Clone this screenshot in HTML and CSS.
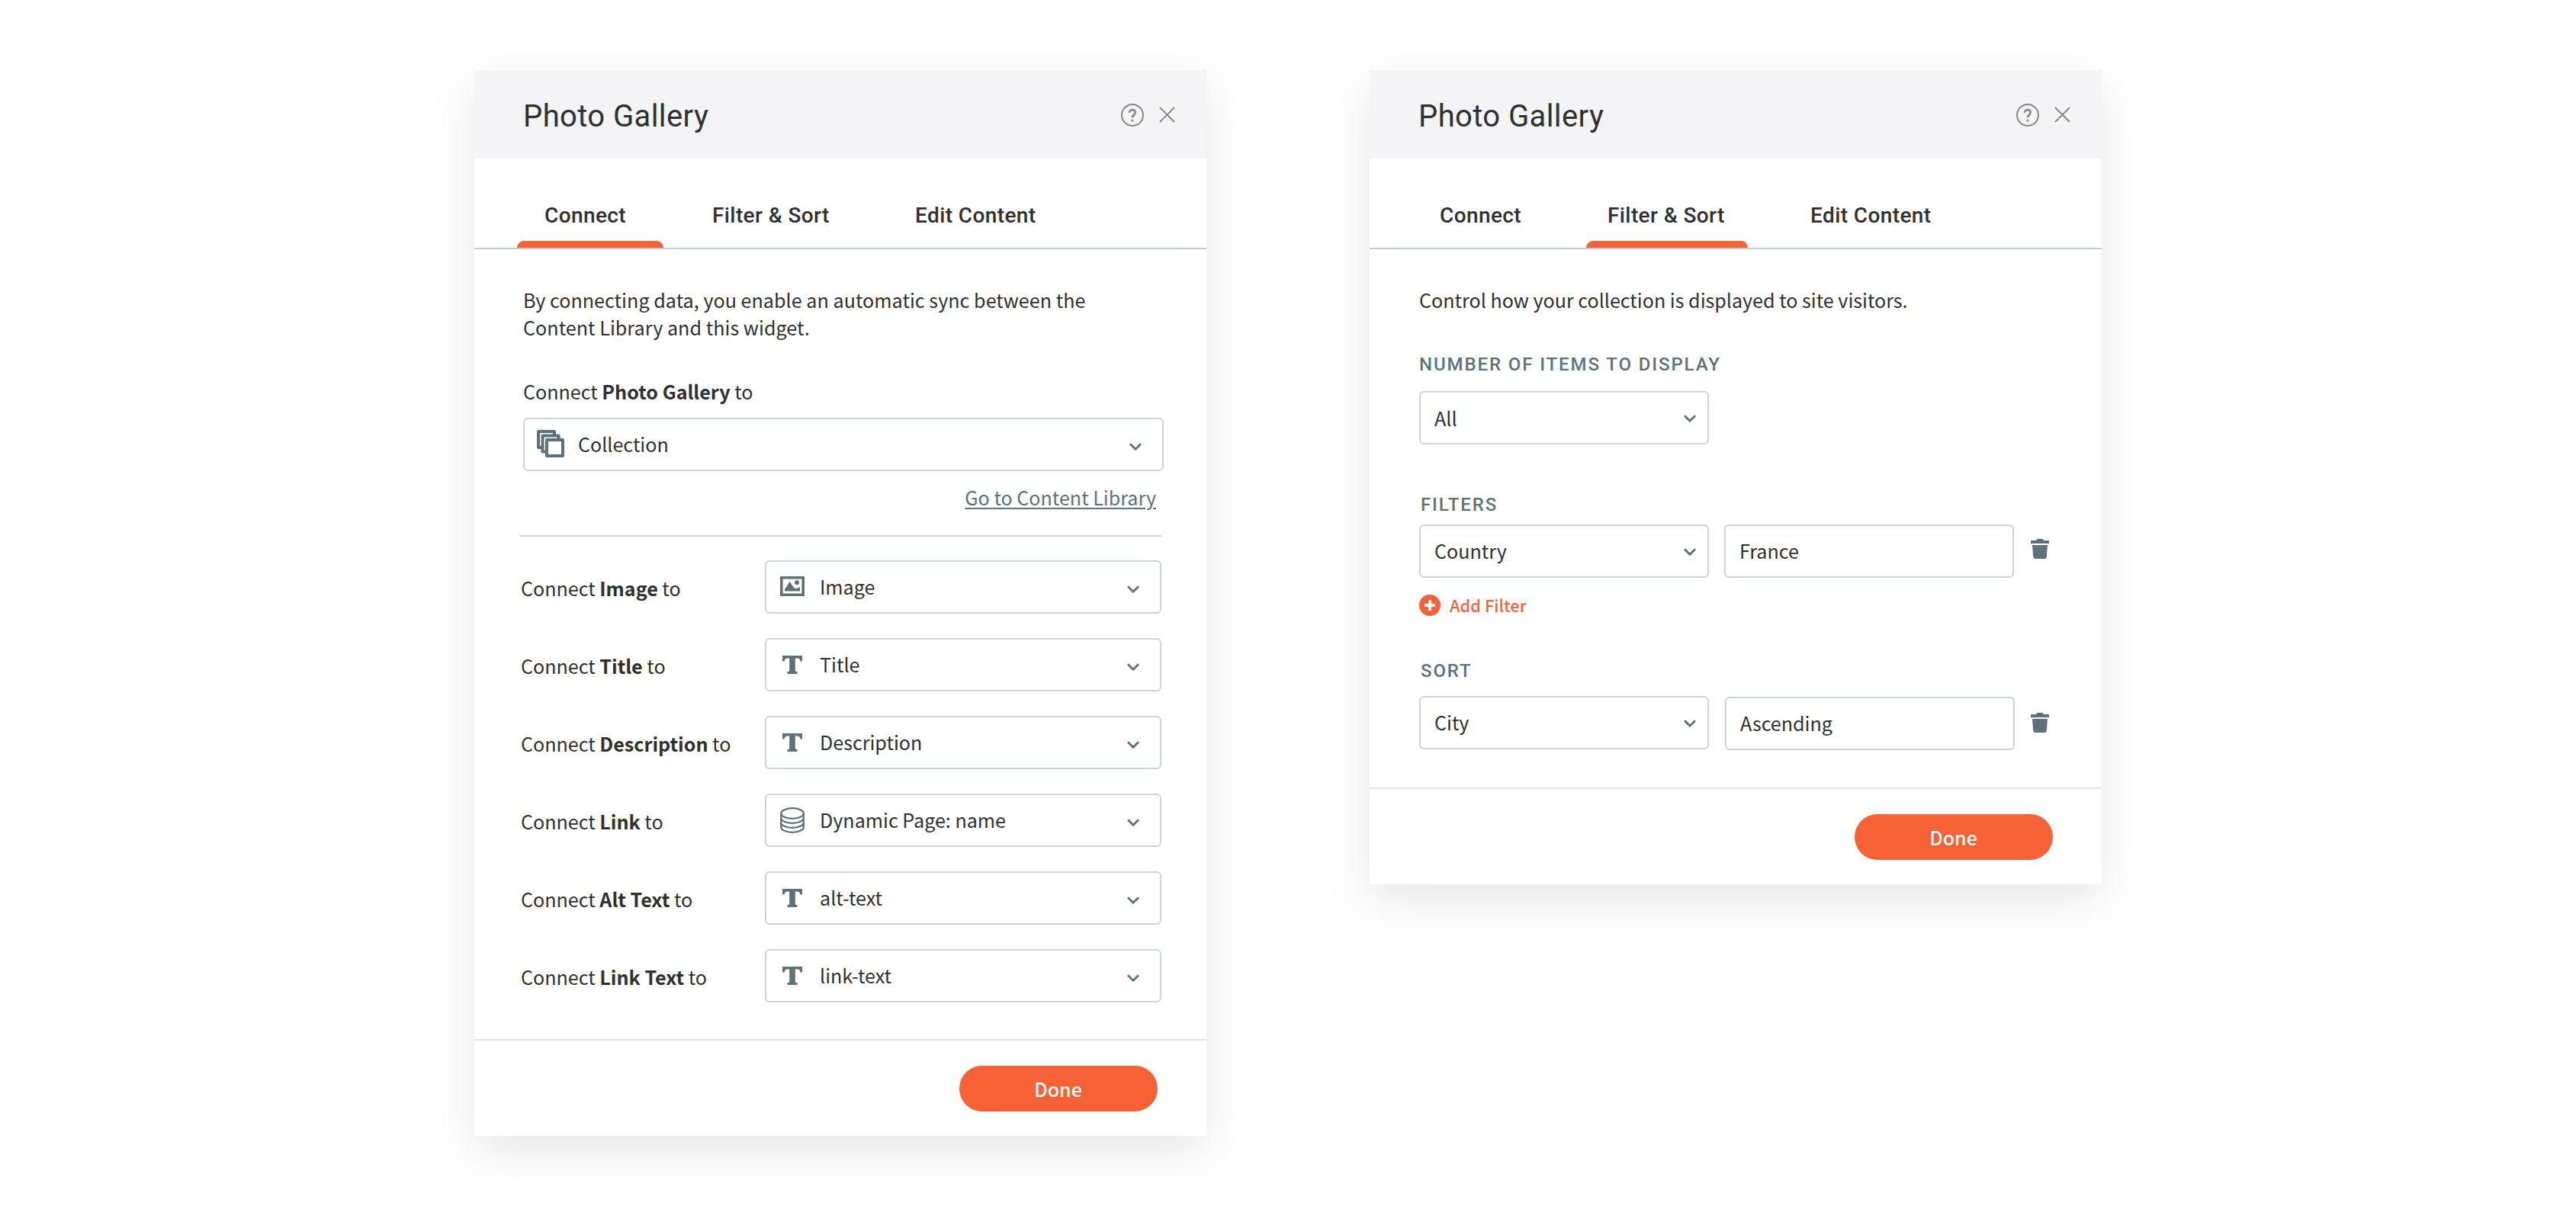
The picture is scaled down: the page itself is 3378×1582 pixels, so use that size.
FILE: index.html
```html
<!DOCTYPE html>
<html lang="en">
  <head>
    <meta charset="UTF-8" />
    <meta name="viewport" content="width=device-width, initial-scale=1.0" />
    <title>Photo Gallery</title>
    <link rel="stylesheet" href="styles.css">
  </head>
  <body>
    <!-- shared icons -->
    <svg class="sprite" aria-hidden="true">
      <symbol id="icon-help" viewBox="0 0 30 30">
        <circle cx="15" cy="15" r="14" fill="none" stroke="currentColor" stroke-width="2" />
        <path d="M11 11.800c0-2.300 1.500-3.700 3.900-3.700 2.300 0 3.800 1.300 3.800 3.300 0 1.500-.8 2.300-1.900 3.300-1.200 1-1.800 1.700-1.800 3.500" fill="none" stroke="currentColor" stroke-width="2.600" />
        <circle cx="14.900" cy="22" r="1.600" fill="currentColor" />
      </symbol>
      <symbol id="icon-close" viewBox="0 0 22 22">
        <path d="M1 1l20 20M21 1L1 21" fill="none" stroke="currentColor" stroke-width="2" />
      </symbol>
      <symbol id="icon-chevron" viewBox="0 0 16 10">
        <path d="M1 1.200l7 7 7-7" fill="none" stroke="currentColor" stroke-width="2.800" />
      </symbol>
      <symbol id="icon-collection" viewBox="0 0 36 36">
        <g fill="#fff" stroke="currentColor" stroke-width="4" stroke-linejoin="round">
          <path d="M2 2h21v21H2z" />
          <path d="M7.500 7.500h21v21h-21z" />
          <path d="M13 13h21v21H13z" />
        </g>
      </symbol>
      <symbol id="icon-image" viewBox="0 0 32 26">
        <path d="M1.800 1.800h28.400v22.400H1.800z" fill="none" stroke="currentColor" stroke-width="3.600" />
        <path d="M6 19.500v-2.500L12.500 7l6 8.500 3 .5 4.500-2v5.500z" fill="currentColor" />
        <circle cx="22" cy="8.200" r="2.900" fill="currentColor" />
      </symbol>
      <symbol id="icon-text" viewBox="0 0 26 24">
        <path d="M0 0h26v7.500h-2.500C23 4.500 22 3.500 19.500 3.500h-2.700v16c0 1.100.8 1.500 2.700 1.600V24h-13v-2.900c1.900-.1 2.700-.5 2.700-1.600v-16H6.500C4 3.500 3 4.500 2.500 7.500H0z" fill="currentColor" />
      </symbol>
      <symbol id="icon-database" viewBox="0 0 32 34">
        <g fill="none" stroke="currentColor" stroke-width="2.200">
          <ellipse cx="16" cy="8" rx="14.800" ry="6.800" />
          <path d="M1.200 8v18c0 3.900 6.600 6.800 14.800 6.800s14.800-2.900 14.800-6.800V8" />
          <path d="M1.200 14c0 3.900 6.600 6.800 14.800 6.800s14.800-2.900 14.800-6.800M1.200 20c0 3.900 6.600 6.800 14.800 6.800s14.800-2.900 14.800-6.800" />
        </g>
      </symbol>
      <symbol id="icon-trash" viewBox="0 0 24 26">
        <path d="M0 3q0-1 1-1h6.500V1q0-1 1-1h7q1 0 1 1v1H23q1 0 1 1v3H0zM2 8h20l-1.200 15.200Q20.500 26 18 26H6q-2.500 0-2.800-2.800z" fill="currentColor" />
      </symbol>
      <symbol id="icon-plus" viewBox="0 0 28 28">
        <circle cx="14" cy="14" r="14" fill="currentColor" />
        <path d="M14 7v14M7 14h14" stroke="#fff" stroke-width="4" />
      </symbol>
    </svg>

    <div class="panels">
      <div class="panel">
        <div class="header">
          <h1>Photo Gallery</h1>
          <svg class="help"><use href="#icon-help" /></svg>
          <svg class="close"><use href="#icon-close" /></svg>
        </div>
        <div class="tabs">
          <div class="tab tab-connect active">Connect</div>
          <div class="tab tab-filter">Filter &amp; Sort</div>
          <div class="tab tab-edit">Edit Content</div>
        </div>
        <div class="content">
          <p class="intro">
            By connecting data, you enable an automatic sync between the<br>
            Content Library and this widget.
          </p>
          <div class="label">Connect <b>Photo Gallery</b> to</div>
          <div class="select select-main">
            <svg class="icon-collection"><use href="#icon-collection" /></svg>
            <span>Collection</span>
            <svg class="chevron"><use href="#icon-chevron" /></svg>
          </div>
          <div class="library"><a class="link">Go to Content Library</a></div>
          <div class="fields">
            <div class="row">
              <div class="label">Connect <b>Image</b> to</div>
              <div class="select">
                <span class="icon"><svg class="icon-image"><use href="#icon-image" /></svg></span>
                <span>Image</span>
                <svg class="chevron"><use href="#icon-chevron" /></svg>
              </div>
            </div>
            <div class="row">
              <div class="label">Connect <b>Title</b> to</div>
              <div class="select">
                <span class="icon"><svg class="icon-text"><use href="#icon-text" /></svg></span>
                <span>Title</span>
                <svg class="chevron"><use href="#icon-chevron" /></svg>
              </div>
            </div>
            <div class="row">
              <div class="label">Connect <b>Description</b> to</div>
              <div class="select">
                <span class="icon"><svg class="icon-text"><use href="#icon-text" /></svg></span>
                <span>Description</span>
                <svg class="chevron"><use href="#icon-chevron" /></svg>
              </div>
            </div>
            <div class="row">
              <div class="label">Connect <b>Link</b> to</div>
              <div class="select">
                <span class="icon"><svg class="icon-database"><use href="#icon-database" /></svg></span>
                <span>Dynamic Page: name</span>
                <svg class="chevron"><use href="#icon-chevron" /></svg>
              </div>
            </div>
            <div class="row">
              <div class="label">Connect <b>Alt Text</b> to</div>
              <div class="select">
                <span class="icon"><svg class="icon-text"><use href="#icon-text" /></svg></span>
                <span>alt-text</span>
                <svg class="chevron"><use href="#icon-chevron" /></svg>
              </div>
            </div>
            <div class="row">
              <div class="label">Connect <b>Link Text</b> to</div>
              <div class="select">
                <span class="icon"><svg class="icon-text"><use href="#icon-text" /></svg></span>
                <span>link-text</span>
                <svg class="chevron"><use href="#icon-chevron" /></svg>
              </div>
            </div>
          </div>
        </div>
        <div class="footer"><button class="btn">Done</button></div>
      </div>

      <div class="panel">
        <div class="header">
          <h1>Photo Gallery</h1>
          <svg class="help"><use href="#icon-help" /></svg>
          <svg class="close"><use href="#icon-close" /></svg>
        </div>
        <div class="tabs">
          <div class="tab tab-connect">Connect</div>
          <div class="tab tab-filter active">Filter &amp; Sort</div>
          <div class="tab tab-edit">Edit Content</div>
        </div>
        <div class="content content-filter">
          <p class="intro">Control how your collection is displayed to site visitors.</p>
          <h2 class="title-number">Number of items to display</h2>
          <div class="select select-small select-number">
            <span>All</span>
            <svg class="chevron"><use href="#icon-chevron" /></svg>
          </div>
          <h2 class="title-filters">Filters</h2>
          <div class="rule">
            <div class="select select-small">
              <span>Country</span>
              <svg class="chevron"><use href="#icon-chevron" /></svg>
            </div>
            <div class="select select-small">France</div>
            <svg class="trash"><use href="#icon-trash" /></svg>
          </div>
          <div class="add">
            <svg><use href="#icon-plus" /></svg>
            <span>Add Filter</span>
          </div>
          <h2 class="title-sort">Sort</h2>
          <div class="rule rule-sort">
            <div class="select select-small">
              <span>City</span>
              <svg class="chevron"><use href="#icon-chevron" /></svg>
            </div>
            <div class="select select-small select-order">Ascending</div>
            <svg class="trash"><use href="#icon-trash" /></svg>
          </div>
        </div>
        <div class="footer"><button class="btn">Done</button></div>
      </div>
    </div>
  </body>
</html>
```
FILE: styles.css
```css
* {
  box-sizing: border-box;
}
body {
  margin: 0;
  background: #fff;
  color: #2f3131;
  font-family: "Noto Sans CJK SC", sans-serif;
  font-size: 25.1px;
}
.sprite {
  display: none;
}
svg {
  display: block;
  flex: none;
}
.panels {
  display: flex;
  align-items: flex-start;
  gap: 214px;
  padding: 92px 0 92px 622px;
}
.panel {
  width: 960px;
  background: #fff;
  box-shadow: 0 20px 60px rgba(0, 0, 0, 0.1);
}
.header {
  display: flex;
  align-items: center;
  height: 116px;
  padding: 0 41px 0 64px;
  background: #f4f4f7;
}
.header h1 {
  flex: 1;
  margin: 5px 0 0;
  font: 400 40px/48px Roboto, sans-serif;
  letter-spacing: 0.4px;
}
.help,
.close {
  color: #868686;
}
.help {
  width: 30px;
  height: 30px;
  margin: 2px 20px 0 0;
}
.close {
  width: 21px;
  height: 21px;
  margin-top: 1px;
}
.tabs {
  display: flex;
  gap: 36px;
  height: 119px;
  padding-left: 56px;
  border-bottom: 2px solid #c5cdd5;
  font: 500 28px/32px Roboto, sans-serif;
  letter-spacing: 0.4px;
}
.tab {
  position: relative;
  width: 212px;
  padding-top: 59px;
  padding-left: 28px;
  white-space: nowrap;
}
.tab-connect {
  width: 192px;
  padding-left: 36px;
}
.active::after {
  content: "";
  position: absolute;
  left: 0;
  right: 0;
  bottom: 0;
  height: 9px;
  border-radius: 9px 9px 0 0;
  background: #f76136;
}
.tab-edit {
  padding-left: 46px;
}
.content {
  padding: 48px 59px 48px;
}
.intro {
  margin: 0 5px 47px;
  line-height: 36px;
  letter-spacing: 0.04px;
}
.content > .label {
  margin: 0 5px 16px;
}
.label {
  line-height: 38px;
  white-space: nowrap;
}
.select {
  display: flex;
  align-items: center;
  width: 520px;
  height: 70px;
  padding: 0 27px 2px 18px;
  border: 2px solid #ced5d9;
  border-radius: 6px;
  line-height: 36px;
  white-space: nowrap;
}
.select-main {
  width: 840px;
  margin-left: 5px;
  padding-left: 16px;
}
.chevron {
  width: 16px;
  height: 10px;
  margin: 8px 0 0 auto;
  color: #607279;
}
.icon {
  width: 32px;
  margin-right: 20px;
  color: #607279;
}
.icon-collection {
  width: 36px;
  height: 36px;
  margin-right: 18px;
  color: #607279;
}
.icon-image {
  width: 32px;
  height: 26px;
}
.icon-text {
  width: 26px;
  height: 24px;
  margin: 2px 0 0 3px;
}
.icon-database {
  width: 32px;
  height: 34px;
  margin-top: 2px;
}
.library {
  height: 84px;
  padding: 15px 7px 0 0;
  text-align: right;
  line-height: 38px;
}
.link {
  color: #607279;
  text-decoration: underline;
  text-decoration-thickness: 2px;
  text-underline-offset: 3px;
}
.fields {
  display: flex;
  flex-direction: column;
  gap: 32px;
  padding-top: 31px;
  border-top: 2px solid #ced5d9;
}
.row {
  display: flex;
  align-items: center;
  justify-content: space-between;
}
.row .label {
  padding: 2px 0 0 2px;
}
.footer {
  display: flex;
  justify-content: flex-end;
  padding: 33px 64px 32px;
  border-top: 2px solid #dee4e8;
}
.btn {
  width: 260px;
  height: 60px;
  padding: 0 1px 1px 0;
  border: none;
  border-radius: 30px;
  background: #f76136;
  color: #fff;
  font: 500 25px/58px "Noto Sans CJK SC", sans-serif;
}

/* Filter & Sort panel */
.content-filter {
  padding: 48px 65px 50px;
}
.content-filter .intro {
  margin: 0;
  letter-spacing: 0;
}
h2 {
  margin: 0;
  color: #607279;
  font: 500 24px/28px Roboto, sans-serif;
  letter-spacing: 1.9px;
  text-transform: uppercase;
}
.title-number {
  padding: 53px 0 21px;
}
.title-filters {
  padding: 65px 0 12px 2px;
}
.title-sort {
  padding: 58px 0 19px 2px;
}
.select-small {
  width: 380px;
  padding: 0 15px 2px 18px;
}
.select-small .chevron {
  margin-top: 4px;
}
.select-number span {
  padding-top: 2px;
}
.rule {
  display: flex;
  gap: 20px;
}
.select-order {
  margin: 1px -1px -1px 1px;
}
.trash {
  width: 24px;
  height: 26px;
  margin: 19px 0 0 2px;
  color: #607279;
}
.rule-sort .trash {
  margin-top: 22px;
}
.add {
  display: flex;
  align-items: center;
  gap: 12px;
  height: 28px;
  margin-top: 22px;
  color: #f76136;
  font-size: 21.800px;
  font-weight: 500;
}
.add svg {
  width: 28px;
  height: 28px;
}
.add span {
  padding-bottom: 2px;
}
```
